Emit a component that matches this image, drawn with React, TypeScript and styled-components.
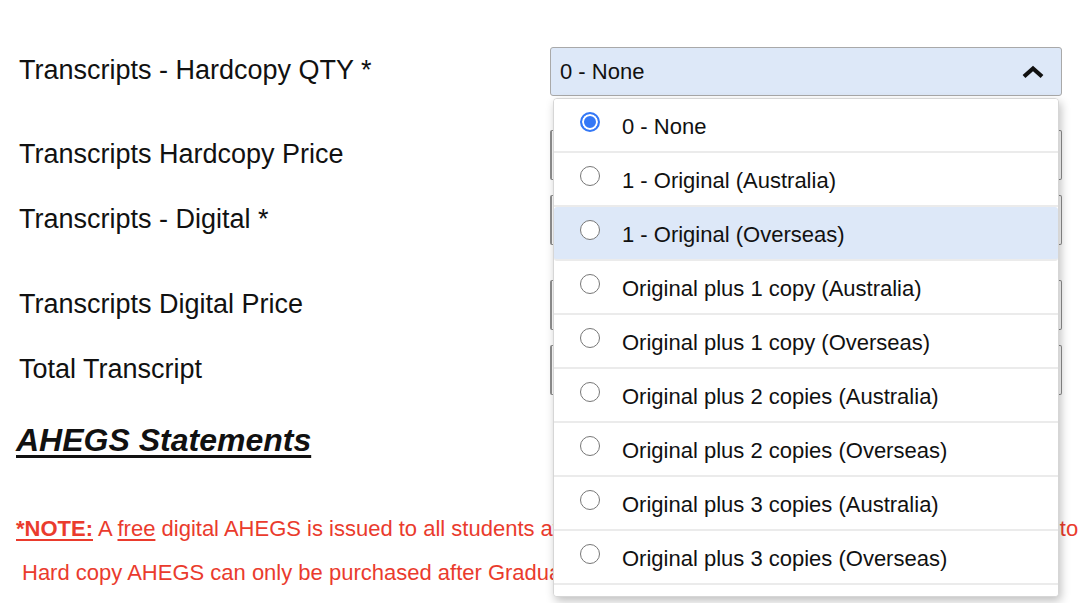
import React, { useState } from "react";
import styled, { createGlobalStyle } from "styled-components";

const GlobalStyle = createGlobalStyle`
  body {
    margin: 0;
    background: #fff;
    font-family: "Liberation Sans", Arial, sans-serif;
    color: #111;
  }
`;

const Page = styled.div`
  width: 1080px;
  height: 603px;
  overflow: hidden;
  padding: 47px 0 0 19px;
  box-sizing: border-box;
`;

const FormRow = styled.div<{ $gap: number }>`
  display: grid;
  grid-template-columns: 531px 512px;
  align-items: center;
  height: 50px;
  margin-top: ${(p) => p.$gap}px;
`;

const Label = styled.div`
  font-size: 27px;
  color: #111;
  padding-bottom: 2px;
`;

const Field = styled.div`
  position: relative;
  height: 100%;
`;

const SelectBox = styled.div<{ $open?: boolean }>`
  height: 49px;
  box-sizing: border-box;
  border: 1px solid #a9a9a9;
  border-radius: 3px;
  background: ${(p) => (p.$open ? "#dde8f8" : "#fff")};
  display: flex;
  align-items: center;
  justify-content: space-between;
  padding: 1px 16px 0 9px;
  font-size: 22px;
  color: #111;
`;

const TextInput = styled.div`
  height: 50px;
  box-sizing: border-box;
  border: 1px solid #8f8f8f;
  border-left-width: 2px;
  border-radius: 2px;
  background: #fff;
`;

const Menu = styled.ul`
  position: absolute;
  top: 51px;
  left: 3px;
  right: 3px;
  height: 497px;
  overflow: hidden;
  margin: 0;
  padding: 0;
  list-style: none;
  background: #fff;
  border: 1px solid #d6d6d6;
  border-radius: 4px;
  box-shadow: 2px 4px 10px rgba(0, 0, 0, 0.25);
  z-index: 10;
`;

const Option = styled.li<{ $hover?: boolean }>`
  height: 54px;
  box-sizing: border-box;
  display: flex;
  align-items: center;
  gap: 22px;
  padding: 3px 0 0 26px;
  font-size: 22px;
  color: #111;
  background: ${(p) => (p.$hover ? "#dde8f8" : "#fff")};
  border-bottom: 2px solid #ebebeb;
  border-radius: ${(p) => (p.$hover ? "3px" : "0")};
`;

const Radio = styled.span<{ $checked?: boolean }>`
  width: 20px;
  height: 20px;
  box-sizing: border-box;
  border-radius: 50%;
  flex: none;
  margin-top: -9px;
  border: ${(p) => (p.$checked ? "2px solid #3478f6" : "1.5px solid #777")};
  background: ${(p) => (p.$checked ? "#3478f6" : "#fff")};
  box-shadow: ${(p) => (p.$checked ? "inset 0 0 0 2px #fff" : "none")};
`;

const Heading = styled.h2`
  margin: 27px 0 0 -3px;
  font-size: 32px;
  font-style: italic;
  font-weight: bold;
  text-decoration: underline;
  text-underline-offset: 4px;
  color: #111;
  line-height: 37px;
`;

const Note = styled.div`
  margin: 48px 0 0 -3px;
  color: #ea3b2d;
  font-size: 22px;
  line-height: 44px;
  white-space: nowrap;
`;

const NoteLine = styled.div<{ $indent?: number }>`
  padding-left: ${(p) => p.$indent ?? 0}px;
  u {
    text-underline-offset: 3px;
  }
`;

const NoteTail = styled.span`
  word-spacing: -0.6px;
`;

const options = [
  "0 - None",
  "1 - Original (Australia)",
  "1 - Original (Overseas)",
  "Original plus 1 copy (Australia)",
  "Original plus 1 copy (Overseas)",
  "Original plus 2 copies (Australia)",
  "Original plus 2 copies (Overseas)",
  "Original plus 3 copies (Australia)",
  "Original plus 3 copies (Overseas)",
  "Original plus 4 copies (Australia)",
];

const Chevron = () => (
  <svg width="24" height="14" viewBox="0 0 24 14">
    <polyline points="3,11.5 12,3.5 21,11.5" fill="none" stroke="#111" strokeWidth="4.2" />
  </svg>
);

export default function App() {
  const [selected] = useState(0);
  const [hovered] = useState(2);

  return (
    <Page>
      <GlobalStyle />
      <FormRow $gap={0} style={{ height: 49 }}>
        <Label>Transcripts - Hardcopy QTY *</Label>
        <Field>
          <SelectBox $open>
            <span>{options[selected]}</span>
            <Chevron />
          </SelectBox>
          <Menu>
            {options.map((o, i) => (
              <Option key={o} $hover={i === hovered}>
                <Radio $checked={i === selected} />
                {o}
              </Option>
            ))}
          </Menu>
        </Field>
      </FormRow>
      <FormRow $gap={34}>
        <Label>Transcripts Hardcopy Price</Label>
        <Field>
          <TextInput />
        </Field>
      </FormRow>
      <FormRow $gap={15}>
        <Label>Transcripts - Digital *</Label>
        <Field>
          <TextInput />
        </Field>
      </FormRow>
      <FormRow $gap={35}>
        <Label>Transcripts Digital Price</Label>
        <Field>
          <TextInput />
        </Field>
      </FormRow>
      <FormRow $gap={15}>
        <Label>Total Transcript</Label>
        <Field>
          <TextInput />
        </Field>
      </FormRow>
      <Heading>AHEGS Statements</Heading>
      <Note>
        <NoteLine>
          <u>
            <b>*NOTE:</b>
          </u>{" "}
          A <u>free</u> digital AHEGS is issued to all students a
          <NoteTail>t no cost after their graduation. If you would also like to</NoteTail>
        </NoteLine>
        <NoteLine $indent={6}>Hard copy AHEGS can only be purchased after Graduation has been confirmed.</NoteLine>
      </Note>
    </Page>
  );
}
